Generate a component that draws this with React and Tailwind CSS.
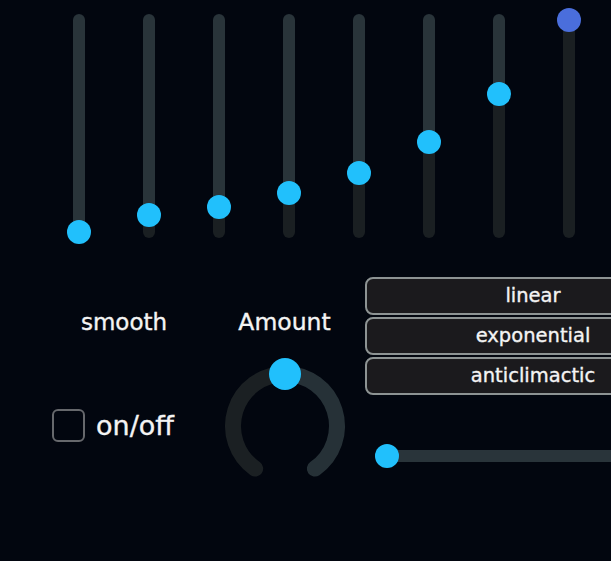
const sliders = [0, 0.08, 0.118, 0.184, 0.278, 0.425, 0.652, 1]

function VSlider({ value, active }) {
  // thumb travel: centre 6px from each end of a 224px track
  const centre = 218 - value * 212
  return (
    <div className="relative w-6 h-[224px]">
      <div className="mx-auto w-3 h-full rounded-full overflow-hidden flex flex-col">
        <div className="flex-1 bg-[#29343a]" />
        <div className="bg-[#1a1f22]" style={{ height: 224 - centre }} />
      </div>
      <div
        className={`absolute left-0 w-6 h-6 rounded-full ${active ? 'bg-[#4a6edc]' : 'bg-[#21c0fc]'}`}
        style={{ top: centre - 12 }}
      />
    </div>
  )
}

function Knob() {
  const cx = 70
  const cy = 70
  const r = 52
  const pt = (deg) => {
    const a = (deg * Math.PI) / 180
    return [cx + r * Math.sin(a), cy - r * Math.cos(a)]
  }
  const [sx, sy] = pt(-145)
  const [ex, ey] = pt(145)
  const [tx, ty] = pt(0)
  return (
    <svg width="140" height="130" viewBox="0 0 140 130" className="mx-auto block">
      <path d={`M ${sx} ${sy} A ${r} ${r} 0 0 1 ${tx} ${ty}`} fill="none" stroke="#1b2023" strokeWidth="16" strokeLinecap="round" />
      <path d={`M ${tx} ${ty} A ${r} ${r} 0 0 1 ${ex} ${ey}`} fill="none" stroke="#263137" strokeWidth="16" strokeLinecap="round" />
      <circle cx={tx} cy={ty} r="16" fill="#21c0fc" />
    </svg>
  )
}

export default function App() {
  return (
    <div className="w-[611px] h-[561px] overflow-hidden bg-[#02060f] text-[#f4f4f4] font-['DejaVu_Sans',sans-serif] [-webkit-text-stroke:0.35px_#f4f4f4]">
      <div className="flex pt-[14px] pl-[44px]">
        {sliders.map((v, i) => (
          <div key={i} className="w-[70px] flex justify-center">
            <VSlider value={v} active={i === 7} />
          </div>
        ))}
      </div>

      <div className="flex pl-[44px] mt-[39px]">
        <div className="w-[160px] shrink-0">
          <div className="mt-8 text-center text-[23px] leading-[26px]">smooth</div>
          <div className="mt-[74px] pl-2 flex items-center gap-[11px]">
            <div className="w-[33px] h-[33px] rounded-md border-2 border-[#66686c]" />
            <span className="text-[27px] leading-[30px]">on/off</span>
          </div>
        </div>

        <div className="w-[161px] shrink-0">
          <div className="mt-8 text-center text-[23.5px] leading-[26px]">Amount</div>
          <div className="mt-[21px]">
            <Knob />
          </div>
        </div>

        <div className="shrink-0">
          <div className="flex flex-col gap-[2px]">
            {['linear', 'exponential', 'anticlimactic'].map(label => (
              <div
                key={label}
                className="w-[336px] h-[38px] rounded-lg border-2 border-[#8d9393] bg-[#1b1a1d] flex items-center justify-center text-[19.5px]"
              >
                {label}
              </div>
            ))}
          </div>
          <div className="relative mt-[49px] ml-[10px] h-6">
            <div className="pt-[6px]">
              <div className="h-3 w-[300px] rounded-full bg-[#29343a]" />
            </div>
            <div className="absolute left-0 top-0 w-6 h-6 rounded-full bg-[#21c0fc]" />
          </div>
        </div>
      </div>
    </div>
  )
}
